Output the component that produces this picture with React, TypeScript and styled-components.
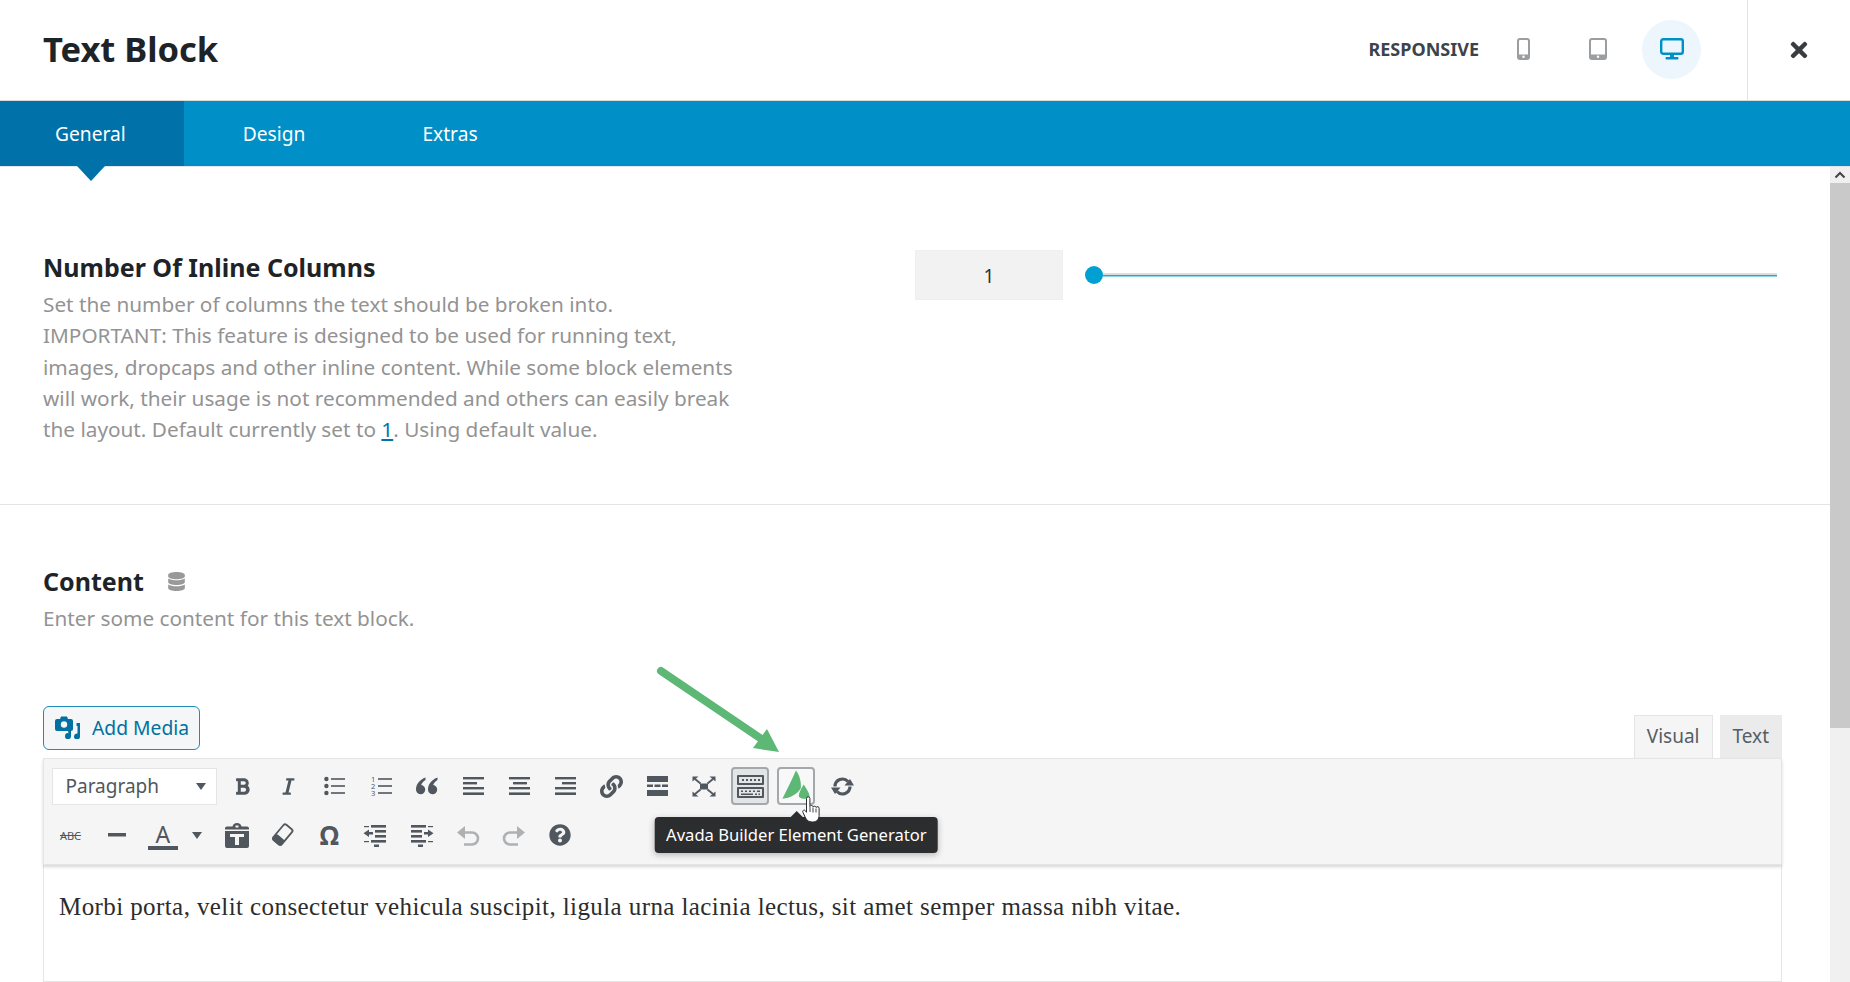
import React from "react";
import styled, { createGlobalStyle } from "styled-components";
import { FaBold, FaDatabase, FaItalic, FaLink, FaQuestionCircle, FaTimes } from "react-icons/fa";

const GlobalStyle = createGlobalStyle`
  html, body { margin: 0; padding: 0; background: #fff; }
  body { font-family: "Noto Sans", "Open Sans", sans-serif; }
`;

const ICON = "#50575e";

const Page = styled.div`
  height: 982px;
  display: flex;
  flex-direction: column;
  overflow: hidden;
`;

const Header = styled.header`
  height: 101px;
  box-sizing: border-box;
  display: flex;
  align-items: stretch;
  border-bottom: 1px solid #d9dadb;
  flex-shrink: 0;
`;

const Title = styled.h1`
  margin: 0;
  padding-left: 43px;
  font-size: 34.5px;
  font-weight: 700;
  line-height: 98px;
  color: #1d2327;
  flex: 1;
`;

const Devices = styled.div`
  display: flex;
  align-items: center;
  gap: 15px;
  margin-right: 46px;
  padding-bottom: 2px;
`;

const ResponsiveLabel = styled.span`
  font-size: 18px;
  font-weight: 700;
  color: #3c434a;
`;

const DeviceButton = styled.button<{ $active?: boolean }>`
  width: 59px;
  height: 59px;
  border: 0;
  padding: 0;
  border-radius: 50%;
  display: flex;
  align-items: center;
  justify-content: center;
  background: ${(p) => (p.$active ? "#edf6fc" : "transparent")};
`;

const CloseCell = styled.div`
  width: 102px;
  border-left: 1px solid #e2e3e4;
  display: flex;
  align-items: center;
  justify-content: center;
  color: #3a3d40;
  font-size: 24px;
`;

const TabBar = styled.nav`
  height: 66px;
  box-sizing: border-box;
  background: #008fc6;
  display: flex;
  flex-shrink: 0;
  border-bottom: 1px solid #e0e6ea;
`;

const Tab = styled.div<{ $active?: boolean }>`
  position: relative;
  padding: 0 58.5px 0 ${(p) => (p.$active ? 55 : 58.5)}px;
  line-height: 65px;
  font-size: 19.2px;
  color: #fff;
  background: ${(p) => (p.$active ? "#0072a9" : "transparent")};

  ${(p) =>
    p.$active &&
    `&::after {
      content: "";
      position: absolute;
      left: 50%;
      top: 100%;
      margin-left: -15px;
      border-left: 14px solid transparent;
      border-right: 14px solid transparent;
      border-top: 15px solid #0072a9;
    }`}
`;

const Body = styled.div`
  flex: 1;
  min-height: 0;
  display: flex;
`;

const Main = styled.main`
  flex: 1;
  min-width: 0;
  display: flex;
  flex-direction: column;
`;

const Scrollbar = styled.div`
  width: 20px;
  background: #f0f0f0;
  display: flex;
  flex-direction: column;
`;

const ScrollUp = styled.div`
  height: 16px;
  display: flex;
  align-items: center;
  justify-content: center;
`;

const ScrollThumb = styled.div`
  height: 545px;
  background: #c9c9c9;
`;

const ColumnsOption = styled.section`
  height: 338px;
  box-sizing: border-box;
  padding: 83px 53px 0 43px;
  border-bottom: 1px solid #e2e4e7;
  display: grid;
  grid-template-columns: 872px 1fr;
`;

const OptionTitle = styled.h3`
  margin: 0 0 5px;
  font-size: 25px;
  line-height: 34px;
  font-weight: 700;
  color: #1d2327;
  display: flex;
  align-items: center;
  gap: 23px;
`;

const OptionDesc = styled.p`
  margin: 0;
  max-width: 720px;
  font-size: 20.75px;
  line-height: 31.3px;
  color: #939393;

  a {
    color: #0073aa;
    text-decoration: underline;
  }
`;

const SliderRow = styled.div`
  display: flex;
  align-items: center;
  height: 50px;
`;

const ValueBox = styled.div`
  width: 148px;
  height: 50px;
  background: #f3f2f3;
  border: 1px solid #efefef;
  box-sizing: border-box;
  padding-top: 1px;
  display: flex;
  align-items: center;
  justify-content: center;
  font-size: 19px;
  color: #333;
  margin-right: 22px;
`;

const Thumb = styled.div`
  width: 18px;
  height: 18px;
  border-radius: 50%;
  background: #00a0d2;
  flex-shrink: 0;
`;

const Track = styled.div`
  flex: 1;
  height: 4px;
  background: linear-gradient(#dddddd 0 40%, #5e8ea3 40% 65%, #8fd8ea 65%);
`;

const ContentOption = styled.section`
  flex: 1;
  min-height: 0;
  padding: 59px 48px 0 43px;
  display: flex;
  flex-direction: column;
`;

const Editor = styled.div`
  position: relative;
  flex: 1;
  min-height: 0;
  margin-top: 73px;
  display: flex;
  flex-direction: column;
`;

const GreenArrow = styled.svg`
  position: absolute;
  left: 612px;
  top: -42px;
`;

const EditorTop = styled.div`
  display: flex;
  justify-content: space-between;
  align-items: flex-end;
  height: 51px;
  flex-shrink: 0;
`;

const AddMedia = styled.button`
  width: 157px;
  height: 44px;
  margin-bottom: 8px;
  box-sizing: border-box;
  border: 1px solid #1f8cb8;
  border-radius: 6px;
  background: #f4f6f7;
  color: #0071a1;
  font: 19.3px "Noto Sans", sans-serif;
  padding: 0 0 1px 11px;
  display: flex;
  align-items: center;
  gap: 12px;
`;

const ModeTabs = styled.div`
  display: flex;
  gap: 7px;
`;

const ModeTab = styled.div<{ $active?: boolean }>`
  height: 43px;
  box-sizing: border-box;
  padding: 0 12px;
  line-height: 40px;
  font-size: 19px;
  color: #555d66;
  background: ${(p) => (p.$active ? "#f5f5f5" : "#ebebeb")};
  border: 1px solid ${(p) => (p.$active ? "#e5e5e5" : "#ebebeb")};
  border-bottom: 0;
`;

const Toolbar = styled.div`
  position: relative;
  height: 107px;
  box-sizing: border-box;
  flex-shrink: 0;
  background: #f5f5f5;
  border: 1px solid #e5e5e5;
  box-shadow: 0 2px 3px rgba(0, 0, 0, 0.16);
  padding: 8px 7.5px 0;
  display: flex;
  flex-direction: column;
  gap: 11px;
`;

const ToolRow = styled.div`
  display: flex;
  align-items: center;
  gap: 8.15px;
  height: 38px;
`;

const FormatSelect = styled.div`
  width: 165px;
  height: 37px;
  box-sizing: border-box;
  background: #fff;
  border: 1px solid #e5e5e5;
  padding: 0 10px 0 13px;
  margin-right: -1px;
  display: flex;
  align-items: center;
  justify-content: space-between;
  font-size: 19px;
  color: #50575e;
`;

const Caret = styled.span`
  border-left: 5.5px solid transparent;
  border-right: 5.5px solid transparent;
  border-top: 7px solid #50575e;
`;

const ToolButton = styled.div<{ $width?: number; $active?: boolean; $framed?: boolean }>`
  position: relative;
  width: ${(p) => p.$width ?? 38}px;
  height: 38px;
  box-sizing: border-box;
  flex-shrink: 0;
  display: flex;
  align-items: center;
  justify-content: center;
  color: ${ICON};
  border-radius: 4px;
  border: ${(p) => (p.$active || p.$framed ? "2px solid #a5a8ab" : "0")};
  background: ${(p) => (p.$active ? "#e3e4e5" : p.$framed ? "#f8f8f8" : "transparent")};
`;

const CaretButton = styled(ToolButton)`
  padding-right: 6px;
`;

const StruckText = styled.span`
  font-size: 11px;
  text-decoration: line-through;
  color: ${ICON};
`;

const ColorLetter = styled.span`
  display: block;
  width: 30px;
  border-bottom: 4px solid ${ICON};
  text-align: center;
  font-size: 23px;
  line-height: 24px;
  color: ${ICON};
  margin-top: 2px;
`;

const Omega = styled.span`
  font-size: 26px;
  font-weight: 700;
  color: ${ICON};
`;

const Tooltip = styled.div`
  position: absolute;
  top: 48px;
  left: 50%;
  transform: translateX(-50%);
  height: 36px;
  padding: 0 11px;
  white-space: nowrap;
  border-radius: 4px;
  background: #2c2d2f;
  color: #fff;
  font-size: 16.6px;
  line-height: 35px;
  box-shadow: 0 2px 6px rgba(0, 0, 0, 0.25);
  z-index: 2;

  &::before {
    content: "";
    position: absolute;
    left: 50%;
    top: -6px;
    margin-left: -6px;
    border-left: 6px solid transparent;
    border-right: 6px solid transparent;
    border-bottom: 6px solid #2c2d2f;
  }
`;

const HandCursor = styled.svg`
  position: absolute;
  left: 23px;
  top: 27px;
  z-index: 3;
`;

const EditorBody = styled.div`
  flex: 1;
  border: 1px solid #e5e5e5;
  border-top: 0;
  padding: 28px 15px 0;
  font-family: "Liberation Serif", Georgia, serif;
  font-size: 25px;
  letter-spacing: 0.41px;
  line-height: 28px;
  color: #2c2c2c;
`;

const MobileIcon = () => (
  <svg width="13" height="22" viewBox="0 0 13 22">
    <rect x="1" y="1" width="11" height="20" rx="2" fill="none" stroke="#9b9ea1" strokeWidth="2" />
    <rect x="1" y="16.5" width="11" height="4.5" fill="#9b9ea1" />
    <circle cx="6.5" cy="18.7" r="1.2" fill="#fff" />
  </svg>
);

const TabletIcon = () => (
  <svg width="18" height="22" viewBox="0 0 18 22">
    <rect x="1" y="1" width="16" height="20" rx="2" fill="none" stroke="#9b9ea1" strokeWidth="2" />
    <rect x="1" y="16.5" width="16" height="4.5" fill="#9b9ea1" />
    <circle cx="9" cy="18.7" r="1.2" fill="#fff" />
  </svg>
);

const DesktopIcon = () => (
  <svg width="24" height="22" viewBox="0 0 24 22" fill="#0090c8">
    <rect x="1.2" y="1.2" width="21.6" height="14.6" rx="2" fill="none" stroke="#0090c8" strokeWidth="2.4" />
    <rect x="10" y="16" width="4" height="3" />
    <rect x="5.5" y="19" width="13" height="2.5" rx="1" />
  </svg>
);

const MediaIcon = () => (
  <svg width="25" height="23" viewBox="0 0 25 23" fill="#0071a1">
    <path d="M2 3h3l1-2.5h6L13 3h3a2 2 0 0 1 2 2v8a2 2 0 0 1-2 2H2a2 2 0 0 1-2-2V5a2 2 0 0 1 2-2z" />
    <circle cx="9" cy="8.5" r="3.2" fill="#f4f6f7" />
    <path d="M21.5 7H25v13.5a3 3 0 1 1-2.5-3V10h-1z" />
    <path d="M13 15h3v5a3 3 0 1 1-2.5-2.8z" />
  </svg>
);

const BulletIcon = () => (
  <svg width="21" height="20" viewBox="0 0 21 20" fill={ICON}>
    <circle cx="2.4" cy="3" r="2.2" />
    <circle cx="2.4" cy="10" r="2.2" />
    <circle cx="2.4" cy="17" r="2.2" />
    <rect x="7" y="2.2" width="14" height="1.6" />
    <rect x="7" y="9.2" width="14" height="1.6" />
    <rect x="7" y="16.2" width="14" height="1.6" />
  </svg>
);

const NumberIcon = () => (
  <svg width="21" height="22" viewBox="0 0 21 22" fill={ICON}>
    <text x="0" y="7" fontSize="7.5" fontFamily="Noto Sans, sans-serif">1</text>
    <text x="0" y="14" fontSize="7.5" fontFamily="Noto Sans, sans-serif">2</text>
    <text x="0" y="21" fontSize="7.5" fontFamily="Noto Sans, sans-serif">3</text>
    <rect x="7" y="3.2" width="14" height="1.6" />
    <rect x="7" y="10.2" width="14" height="1.6" />
    <rect x="7" y="17.2" width="14" height="1.6" />
  </svg>
);

const QuoteIcon = () => (
  <svg width="22" height="18" viewBox="0 0 22 18" fill={ICON}>
    <path d="M9.5 0.5C4 2.5 0 7 0 12.5a4.6 4.6 0 1 0 5.2-4.4C5.8 6 7.5 4 9.5 3z" />
    <path d="M21.5 0.5C16 2.5 12 7 12 12.5a4.6 4.6 0 1 0 5.2-4.4C17.8 6 19.5 4 21.5 3z" />
  </svg>
);

const AlignIcon = ({ align }: { align: "left" | "center" | "right" }) => {
  const short = align === "left" ? 0 : align === "center" ? 4 : 7;
  return (
    <svg width="21" height="18" viewBox="0 0 21 18" fill={ICON}>
      <rect x="0" y="0" width="21" height="2.4" />
      <rect x={short} y="5" width="14" height="2.4" />
      <rect x="0" y="10" width="21" height="2.4" />
      <rect x="0" y="15.4" width="21" height="2.6" />
    </svg>
  );
};

const MoreIcon = () => (
  <svg width="21" height="20" viewBox="0 0 21 20" fill={ICON}>
    <rect x="0" y="0" width="21" height="6" />
    <rect x="0" y="8.5" width="6" height="2.5" />
    <rect x="7.5" y="8.5" width="6" height="2.5" />
    <rect x="15" y="8.5" width="6" height="2.5" />
    <rect x="0" y="14" width="21" height="6" />
  </svg>
);

const FullscreenIcon = () => (
  <svg width="24" height="21" viewBox="0 0 24 21" fill={ICON} stroke={ICON}>
    <rect x="8" y="7.5" width="8" height="6" stroke="none" />
    <path d="M0.5 0.5h6l-6 5z M23.5 0.5h-6l6 5z M0.5 20.5h6l-6-5z M23.5 20.5h-6l6-5z" stroke="none" />
    <path d="M3 3l5.5 4.5M21 3l-5.5 4.5M3 18l5.500-4.500M21 18l-5.500-4.500" strokeWidth="1.8" fill="none" />
  </svg>
);

const KitchenSinkIcon = () => (
  <svg width="27" height="23" viewBox="0 0 27 23">
    <rect x="0" y="0" width="27" height="10" rx="1" fill={ICON} />
    <rect x="0" y="12" width="27" height="11" rx="1" fill={ICON} />
    <rect x="2" y="2" width="23" height="6" fill="#e3e4e5" />
    <rect x="2" y="14" width="23" height="7" fill="#e3e4e5" />
    <path d="M5 4h2v2H5zM9 4h2v2H9zM13 4h2v2h-2zM17 4h2v2h-2zM21 4h2v2h-2z" fill={ICON} />
    <path d="M4 15.500h2v1.500H4zM8 15.500h2v1.500H8zM12 15.500h2v1.500h-2zM16 15.500h2v1.500h-2zM20 15.500h3v1.500h-3zM4 18.500h12v1.500H4zM18 18.500h2v1.500h-2zM21.500 18.500h1.500v1.500h-1.500z" fill={ICON} />
  </svg>
);

const AvadaIcon = () => (
  <svg width="35" height="34" viewBox="2 2 35 34" fill="#5cb874">
    <path d="M19.500 3C23 8 25 14 24.500 21C22 27 13 31.500 5.500 32C10 23 15 13 19.500 3z" />
    <path d="M27.500 17.500C29.500 21 33.500 26 33.500 30C32 33 26 33 22.500 30C22 27 25 21 27.500 17.500z" />
  </svg>
);

const SyncIcon = () => (
  <svg width="25" height="21" viewBox="0 0 25 21" fill={ICON}>
    <path d="M5 10.500a7.500 7.500 0 0 1 13-5" fill="none" stroke={ICON} strokeWidth="3.200" />
    <path d="M14.500 9.500h9.500l-4-6.500z" />
    <path d="M20 10.500a7.500 7.500 0 0 1-13 5" fill="none" stroke={ICON} strokeWidth="3.200" />
    <path d="M10.500 11.500h-9.500l4 6.500z" />
  </svg>
);

const Hand = () => (
  <HandCursor width="18" height="27" viewBox="0 0 18 27">
    <path
      d="M4.500 2.500a1.700 1.700 0 0 1 3.400 0v8a1.700 1.700 0 0 1 3.200.3a1.700 1.700 0 0 1 3 .7a1.600 1.600 0 0 1 3 .9v7c0 4-2.600 6.600-6.500 6.600c-4 0-5.500-1.500-7-4L1 16.500c-1-1.800 1-3.200 2.300-1.800l1.200 1.600z"
      fill="#fff"
      stroke="#2c2d2f"
      strokeWidth="1"
    />
    <path d="M8 11v5M11 11.500v5M14 12.500v4" stroke="#2c2d2f" strokeWidth="0.9" fill="none" />
  </HandCursor>
);

const PasteIcon = () => (
  <svg width="24" height="25" viewBox="0 0 24 25">
    <path
      d="M2 3.500h5.500C8 1.500 9.500 0 12 0s4 1.500 4.500 3.500H22a2 2 0 0 1 2 2V23a2 2 0 0 1-2 2H2a2 2 0 0 1-2-2V5.500a2 2 0 0 1 2-2z"
      fill={ICON}
    />
    <rect x="10.500" y="2.500" width="3" height="2" fill="#f5f5f5" />
    <rect x="0" y="6.500" width="24" height="1.500" fill="#f5f5f5" />
    <rect x="5" y="11" width="14" height="3" fill="#f5f5f5" />
    <rect x="10" y="11" width="4" height="11" fill="#f5f5f5" />
  </svg>
);

const EraserIcon = () => (
  <svg width="22" height="24" viewBox="0 0 22 24">
    <g transform="rotate(-50 11 12)">
      <rect x="1" y="6" width="20" height="11" rx="2" fill="none" stroke={ICON} strokeWidth="1.800" />
      <rect x="1" y="6" width="7" height="11" rx="2" fill={ICON} />
    </g>
  </svg>
);

const IndentLines = () => (
  <>
    <rect x="8" y="1" width="15" height="2.600" />
    <rect x="12" y="6" width="11" height="2.600" />
    <rect x="12" y="11" width="11" height="2.600" />
    <rect x="8" y="16" width="15" height="2.600" />
    <rect x="1" y="2" width="5" height="1.200" />
    <rect x="1" y="17" width="5" height="1.200" />
    <rect x="11" y="20.500" width="5" height="2.500" />
    <path d="M0.500 9.300 L6 5.500 V8h4v2.600H6v2.500z" />
  </>
);

const OutdentIcon = () => (
  <svg width="24" height="23" viewBox="0 0 24 23" fill={ICON}>
    <IndentLines />
  </svg>
);

const IndentIcon = () => (
  <svg width="24" height="23" viewBox="0 0 24 23" fill={ICON}>
    <g transform="translate(24 0) scale(-1 1)">
      <IndentLines />
    </g>
  </svg>
);

const HistoryArrow = () => (
  <>
    <path d="M7 8.500h9a6 6 0 0 1 0 12H8" fill="none" stroke="#aeb1b4" strokeWidth="2.600" />
    <path d="M9 2 L1 8.500 L9 15z" fill="#aeb1b4" />
  </>
);

const UndoIcon = () => (
  <svg width="24" height="22" viewBox="0 0 24 22">
    <HistoryArrow />
  </svg>
);

const RedoIcon = () => (
  <svg width="24" height="22" viewBox="0 0 24 22">
    <g transform="translate(24 0) scale(-1 1)">
      <HistoryArrow />
    </g>
  </svg>
);

const App = () => (
  <Page>
    <GlobalStyle />
    <Header>
      <Title>Text Block</Title>
      <Devices>
        <ResponsiveLabel>RESPONSIVE</ResponsiveLabel>
        <DeviceButton>
          <MobileIcon />
        </DeviceButton>
        <DeviceButton>
          <TabletIcon />
        </DeviceButton>
        <DeviceButton $active>
          <DesktopIcon />
        </DeviceButton>
      </Devices>
      <CloseCell>
        <FaTimes />
      </CloseCell>
    </Header>
    <TabBar>
      <Tab $active>General</Tab>
      <Tab>Design</Tab>
      <Tab>Extras</Tab>
    </TabBar>
    <Body>
      <Main>
        <ColumnsOption>
          <div>
            <OptionTitle>Number Of Inline Columns</OptionTitle>
            <OptionDesc>
              Set the number of columns the text should be broken into.
              <br />
              IMPORTANT: This feature is designed to be used for running text,
              <br />
              images, dropcaps and other inline content. While some block elements
              <br />
              will work, their usage is not recommended and others can easily break
              <br />
              the layout. Default currently set to <a href="#1">1</a>. Using default value.
            </OptionDesc>
          </div>
          <SliderRow>
            <ValueBox>1</ValueBox>
            <Thumb />
            <Track />
          </SliderRow>
        </ColumnsOption>
        <ContentOption>
          <OptionTitle>
            Content
            <FaDatabase color="#999" size={19} />
          </OptionTitle>
          <OptionDesc>Enter some content for this text block.</OptionDesc>
          <Editor>
            <GreenArrow width="130" height="92" viewBox="0 0 130 92">
              <path d="M6 6L105 73" stroke="#5cb874" strokeWidth="8" strokeLinecap="round" fill="none" />
              <path d="M112 64L124 87L98 83z" fill="#5cb874" />
            </GreenArrow>
            <EditorTop>
              <AddMedia>
                <MediaIcon />
                Add Media
              </AddMedia>
              <ModeTabs>
                <ModeTab $active>Visual</ModeTab>
                <ModeTab>Text</ModeTab>
              </ModeTabs>
            </EditorTop>
            <Toolbar>
              <ToolRow>
                <FormatSelect>
                  Paragraph
                  <Caret />
                </FormatSelect>
                <ToolButton>
                  <FaBold size={19} />
                </ToolButton>
                <ToolButton>
                  <FaItalic size={19} />
                </ToolButton>
                <ToolButton>
                  <BulletIcon />
                </ToolButton>
                <ToolButton>
                  <NumberIcon />
                </ToolButton>
                <ToolButton>
                  <QuoteIcon />
                </ToolButton>
                <ToolButton>
                  <AlignIcon align="left" />
                </ToolButton>
                <ToolButton>
                  <AlignIcon align="center" />
                </ToolButton>
                <ToolButton>
                  <AlignIcon align="right" />
                </ToolButton>
                <ToolButton>
                  <FaLink size={23} />
                </ToolButton>
                <ToolButton>
                  <MoreIcon />
                </ToolButton>
                <ToolButton>
                  <FullscreenIcon />
                </ToolButton>
                <ToolButton $active>
                  <KitchenSinkIcon />
                </ToolButton>
                <ToolButton $framed>
                  <AvadaIcon />
                  <Tooltip>Avada Builder Element Generator</Tooltip>
                  <Hand />
                </ToolButton>
                <ToolButton>
                  <SyncIcon />
                </ToolButton>
              </ToolRow>
              <ToolRow>
                <ToolButton>
                  <StruckText>ABC</StruckText>
                </ToolButton>
                <ToolButton>
                  <svg width="18" height="4" viewBox="0 0 18 4" fill={ICON}>
                    <rect width="18" height="3.500" />
                  </svg>
                </ToolButton>
                <ToolButton>
                  <ColorLetter>A</ColorLetter>
                </ToolButton>
                <CaretButton $width={20}>
                  <Caret />
                </CaretButton>
                <ToolButton>
                  <PasteIcon />
                </ToolButton>
                <ToolButton>
                  <EraserIcon />
                </ToolButton>
                <ToolButton>
                  <Omega>Ω</Omega>
                </ToolButton>
                <ToolButton>
                  <OutdentIcon />
                </ToolButton>
                <ToolButton>
                  <IndentIcon />
                </ToolButton>
                <ToolButton>
                  <UndoIcon />
                </ToolButton>
                <ToolButton>
                  <RedoIcon />
                </ToolButton>
                <ToolButton>
                  <FaQuestionCircle size={22} />
                </ToolButton>
              </ToolRow>
            </Toolbar>
            <EditorBody>
              Morbi porta, velit consectetur vehicula suscipit, ligula urna lacinia lectus, sit amet semper massa nibh vitae.
            </EditorBody>
          </Editor>
        </ContentOption>
      </Main>
      <Scrollbar>
        <ScrollUp>
          <svg width="12" height="8" viewBox="0 0 12 8">
            <path d="M1.500 6.500L6 2l4.500 4.500" fill="none" stroke="#444" strokeWidth="2" />
          </svg>
        </ScrollUp>
        <ScrollThumb />
      </Scrollbar>
    </Body>
  </Page>
);

export default App;
